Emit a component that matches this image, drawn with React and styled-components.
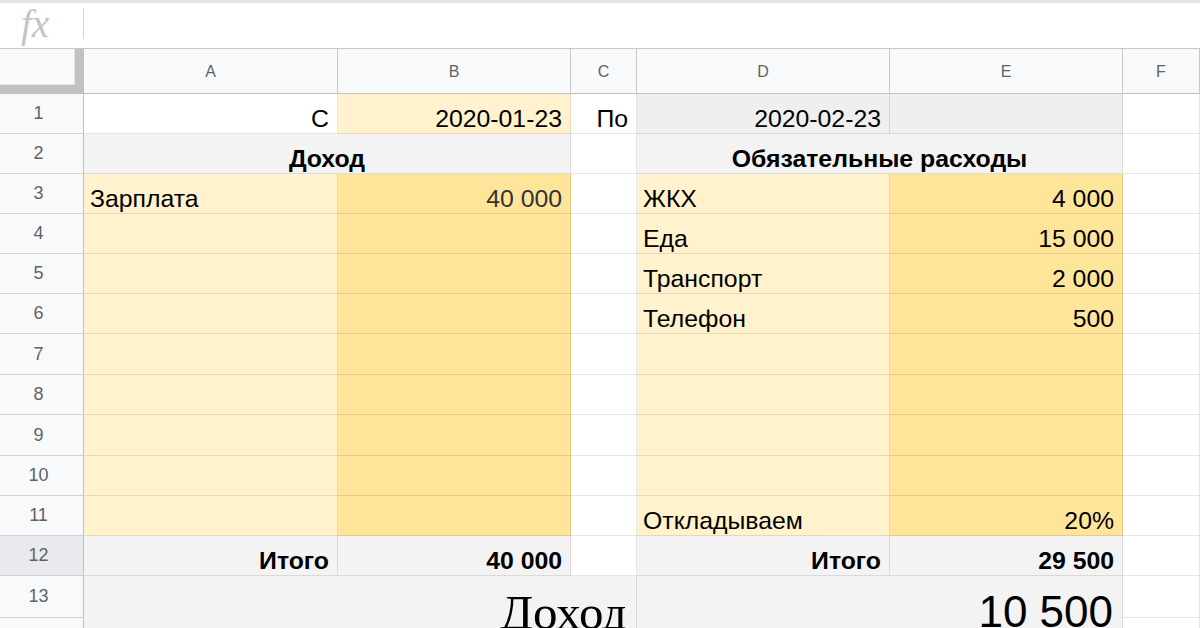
import React from "react";
import styled, { createGlobalStyle } from "styled-components";

const GlobalStyle = createGlobalStyle`
  html, body { margin: 0; padding: 0; background: #ffffff; overflow: hidden; }
  body { font-family: "Liberation Sans", Arial, sans-serif; }
  * { box-sizing: border-box; }
`;

const COLORS = {
  white: "#ffffff",
  ly: "#fff2cc",
  dy: "#ffe599",
  gray: "#f3f3f3",
  gray2: "#efefef",
};

const Page = styled.div`
  width: 1200px;
  height: 628px;
  overflow: hidden;
  display: flex;
  flex-direction: column;
`;

const FormulaBar = styled.div`
  height: 48px;
  flex: none;
  border-top: 3px solid #e3e3e3;
  display: flex;
  align-items: center;
`;

const FxLabel = styled.div`
  width: 83px;
  flex: none;
  display: flex;
  justify-content: flex-start;
  padding-left: 21px;
  font-family: "Liberation Serif", "Times New Roman", serif;
  font-style: italic;
  font-size: 39px;
  line-height: 1;
  color: #c4c4c4;
  margin-top: -4px;
`;

const FxDivider = styled.div`
  width: 1px;
  height: 31px;
  background: #d6d6d6;
  margin-top: -4px;
`;

const Sheet = styled.div`
  flex: none;
  display: grid;
  grid-template-columns: 84px 254px 233px 66px 253px 233px 1fr;
  grid-template-rows: 45px 40px 40px 40px 40px 40px 40px 41px 40px 41px 40px 40px 40px 42px 60px;
  border-top: 1px solid #c8c8c8;
`;

const Corner = styled.div`
  grid-column: 1;
  grid-row: 1;
  background: #f8f9fa;
  border-right: 1px solid #c0c0c0;
  border-bottom: 1px solid #c0c0c0;
  box-shadow: inset -8px -8px 0 0 #c2c2c2, inset -9px -9px 0 0 #e3e3e3;
`;

const ColHead = styled.div`
  grid-column: ${(p) => p.$col};
  grid-row: 1;
  background: #f8f9fa;
  border-right: 1px solid #c8c8c8;
  border-bottom: 1px solid #c0c0c0;
  display: flex;
  align-items: center;
  justify-content: center;
  font-size: 16px;
  color: #5f6368;
  padding-top: 2px;
`;

const RowHead = styled.div`
  grid-column: 1;
  grid-row: ${(p) => p.$row};
  background: ${(p) => (p.$active ? "#e8eaed" : "#f8f9fa")};
  border-right: 1px solid #c0c0c0;
  border-bottom: 1px solid #d0d0d0;
  display: flex;
  align-items: ${(p) => (p.$tall ? "flex-start" : "center")};
  padding-top: ${(p) => (p.$tall ? "22px" : "0")};
  justify-content: center;
  padding-right: 6px;
  font-size: 18px;
  color: #5f6368;
`;

const Cell = styled.div`
  grid-column: ${(p) => p.$col} / span ${(p) => p.$colSpan || 1};
  grid-row: ${(p) => p.$row} / span ${(p) => p.$rowSpan || 1};
  background: ${(p) => p.$bg || "#ffffff"};
  border-right: 1px solid rgba(0, 0, 0, 0.1);
  border-bottom: 1px solid rgba(0, 0, 0, 0.1);
  display: flex;
  align-items: flex-end;
  justify-content: ${(p) =>
    p.$align === "right" ? "flex-end" : p.$align === "center" ? "center" : "flex-start"};
  padding: 0 8px 0 ${(p) => (p.$align === "left" ? "6px" : "8px")};
  font-size: 24.8px;
  line-height: 28px;
  font-weight: ${(p) => (p.$bold ? 700 : 400)};
  color: ${(p) => p.$color || "#000000"};
  white-space: nowrap;
  overflow: hidden;
`;

const BigCell = styled.div`
  grid-column: ${(p) => p.$col} / span ${(p) => p.$colSpan || 1};
  grid-row: ${(p) => p.$row} / span 2;
  background: ${COLORS.gray};
  border-right: 1px solid rgba(0, 0, 0, 0.1);
  display: flex;
  align-items: flex-start;
  justify-content: flex-end;
  padding: ${(p) => (p.$serif ? "12px" : "14px")} 9px 0 8px;
  font-family: ${(p) =>
    p.$serif ? '"Liberation Serif", "Times New Roman", serif' : '"Liberation Sans", Arial, sans-serif'};
  font-size: ${(p) => p.$size}px;
  line-height: 1;
  color: #000;
  white-space: nowrap;
  overflow: hidden;
`;

const cols = ["A", "B", "C", "D", "E", "F"];

const cell = (col, t = "", bg = COLORS.white, align = "right", extra = {}) => ({ col, t, bg, align, ...extra });

const bodyRows = [
  [
    cell(2, "С"),
    cell(3, "2020-01-23", COLORS.ly),
    cell(4, "По"),
    cell(5, "2020-02-23", COLORS.gray2),
    cell(6, "", COLORS.gray2),
    cell(7),
  ],
  [
    cell(2, "Доход", COLORS.gray, "center", { span: 2, bold: true }),
    cell(4),
    cell(5, "Обязательные расходы", COLORS.gray, "center", { span: 2, bold: true }),
    cell(7),
  ],
];

const items = [
  ["Зарплата", "40 000", "ЖКХ", "4 000"],
  ["", "", "Еда", "15 000"],
  ["", "", "Транспорт", "2 000"],
  ["", "", "Телефон", "500"],
  ["", "", "", ""],
  ["", "", "", ""],
  ["", "", "", ""],
  ["", "", "", ""],
  ["", "", "Откладываем", "20%"],
];

items.forEach(([a, b, d, e]) => {
  bodyRows.push([
    cell(2, a, COLORS.ly, "left"),
    cell(3, b, COLORS.dy, "right", { color: b === "40 000" ? "#333333" : "#000000" }),
    cell(4),
    cell(5, d, COLORS.ly, "left"),
    cell(6, e, COLORS.dy),
    cell(7),
  ]);
});

bodyRows.push([
  cell(2, "Итого", COLORS.gray, "right", { bold: true }),
  cell(3, "40 000", COLORS.gray, "right", { bold: true }),
  cell(4),
  cell(5, "Итого", COLORS.gray, "right", { bold: true }),
  cell(6, "29 500", COLORS.gray, "right", { bold: true }),
  cell(7),
]);

export default function App() {
  return (
    <>
      <GlobalStyle />
      <Page>
        <FormulaBar>
          <FxLabel>fx</FxLabel>
          <FxDivider />
        </FormulaBar>
        <Sheet>
          <Corner />
          {cols.map((c, i) => (
            <ColHead key={c} $col={i + 2}>
              {c}
            </ColHead>
          ))}
          {Array.from({ length: 14 }, (_, i) => (
            <RowHead key={i} $row={i + 2} $active={i + 1 === 12} $tall={i + 1 === 14}>
              {i + 1}
            </RowHead>
          ))}
          {bodyRows.map((row, ri) =>
            row.map((c) => (
              <Cell
                key={`${ri}-${c.col}`}
                $row={ri + 2}
                $col={c.col}
                $colSpan={c.span}
                $bg={c.bg}
                $align={c.align}
                $bold={c.bold}
                $color={c.color}
              >
                {c.t}
              </Cell>
            ))
          )}
          <BigCell $row={14} $col={2} $colSpan={3} $serif $size={49}>
            Доход
          </BigCell>
          <BigCell $row={14} $col={5} $colSpan={2} $size={44}>
            10 500
          </BigCell>
          <Cell $row={14} $col={7} />
          <Cell $row={15} $col={7} />
        </Sheet>
      </Page>
    </>
  );
}
